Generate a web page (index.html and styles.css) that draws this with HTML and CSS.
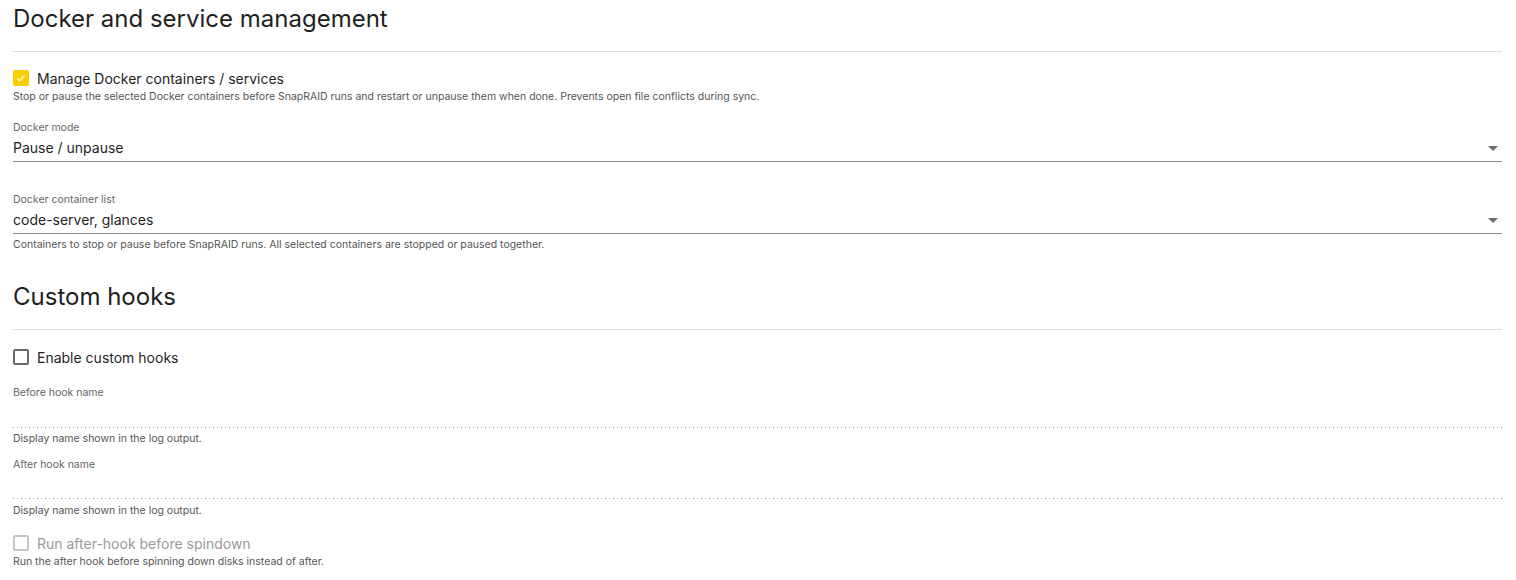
FILE: index.html
```html
<!DOCTYPE html>
<html lang="en">
<head>
    <meta charset="UTF-8">
    <meta name="viewport" content="width=device-width, initial-scale=1.0">
    <title>SnapRAID settings</title>
    <link rel="stylesheet" href="styles.css">
</head>
<body>
    <section class="group">
        <h2 class="group-title">Docker and service management</h2>

        <label class="check">
            <span class="box checked">
                <svg viewBox="0 0 16 16" width="12" height="12"><path d="M3 8.5l3 3 7-7" fill="none" stroke="#fff" stroke-width="1.6"/></svg>
            </span>
            <span>Manage Docker containers / services</span>
        </label>
        <div class="hint tight">Stop or pause the selected Docker containers before SnapRAID runs and restart or unpause them when done. Prevents open file conflicts during sync.</div>

        <div class="field first">
            <div class="field-label">Docker mode</div>
            <div class="field-input select">
                <span>Pause / unpause</span>
                <span class="arrow"></span>
            </div>
        </div>

        <div class="field spaced">
            <div class="field-label">Docker container list</div>
            <div class="field-input select">
                <span>code-server, glances</span>
                <span class="arrow"></span>
            </div>
            <div class="hint">Containers to stop or pause before SnapRAID runs. All selected containers are stopped or paused together.</div>
        </div>
    </section>

    <section class="group">
        <h2 class="group-title">Custom hooks</h2>

        <label class="check lower">
            <span class="box"></span>
            <span>Enable custom hooks</span>
        </label>

        <div class="field hooks">
            <div class="field-label">Before hook name</div>
            <div class="field-input text"></div>
            <div class="hint">Display name shown in the log output.</div>
        </div>

        <div class="field next">
            <div class="field-label">After hook name</div>
            <div class="field-input text short"></div>
            <div class="hint loose">Display name shown in the log output.</div>
        </div>

        <label class="check disabled">
            <span class="box"></span>
            <span>Run after-hook before spindown</span>
        </label>
        <div class="hint tight">Run the after hook before spinning down disks instead of after.</div>
    </section>
</body>
</html>
```

FILE: styles.css
```css
body {
    font-family: Inter, "Noto Sans", sans-serif;
    color: #1f1f1f;
    margin: 0;
    padding: 4px 14px 0 13px;
}
.group + .group {
    margin-top: 30px;
}
.group-title {
    font-size: 24px;
    font-weight: 400;
    line-height: 30px;
    margin: 0;
    padding-bottom: 17px;
    border-bottom: 1px solid #dedede;
}

/* checkboxes */
.check {
    display: flex;
    align-items: center;
    gap: 8px;
    height: 20px;
    margin-top: 16px;
    font-size: 14px;
}
.check.lower {
    margin-top: 17px;
}
.box {
    width: 16px;
    height: 16px;
    box-sizing: border-box;
    border: 2px solid #6b6b6b;
    border-radius: 2px;
    display: flex;
    align-items: center;
    justify-content: center;
}
.box.checked {
    background-color: #f6cf00;
    border-color: #f6cf00;
}
.check.disabled {
    color: #9a9a9a;
    margin-top: 15px;
}
.check.disabled .box {
    border-color: #c4c4c4;
}

/* helper text under a control */
.hint {
    font-size: 10.5px;
    line-height: 14px;
    color: #555;
    margin-top: 4px;
}
.hint.tight {
    margin-top: 2px;
}
.hint.loose {
    margin-top: 5px;
}

/* fields */
.field.first {
    margin-top: 17px;
}
.field.spaced {
    margin-top: 31px;
}
.field.hooks {
    margin-top: 19px;
}
.field.next {
    margin-top: 12px;
}
.field-label {
    font-size: 10.5px;
    line-height: 14px;
    color: #666;
}
.field-input {
    font-size: 14px;
    line-height: 20px;
    box-sizing: border-box;
}
.select {
    display: flex;
    justify-content: space-between;
    align-items: center;
    border-bottom: 1px solid #8a8a8a;
    height: 27px;
}
.arrow {
    width: 0;
    height: 0;
    border-left: 5px solid transparent;
    border-right: 5px solid transparent;
    border-top: 5px solid #6b6b6b;
    margin-right: 4px;
}
.text {
    height: 28px;
    background: linear-gradient(to right, #9a9a9a 1px, transparent 1px) 0 100% / 4px 1px repeat-x;
}
.text.short {
    height: 27px;
}
```
